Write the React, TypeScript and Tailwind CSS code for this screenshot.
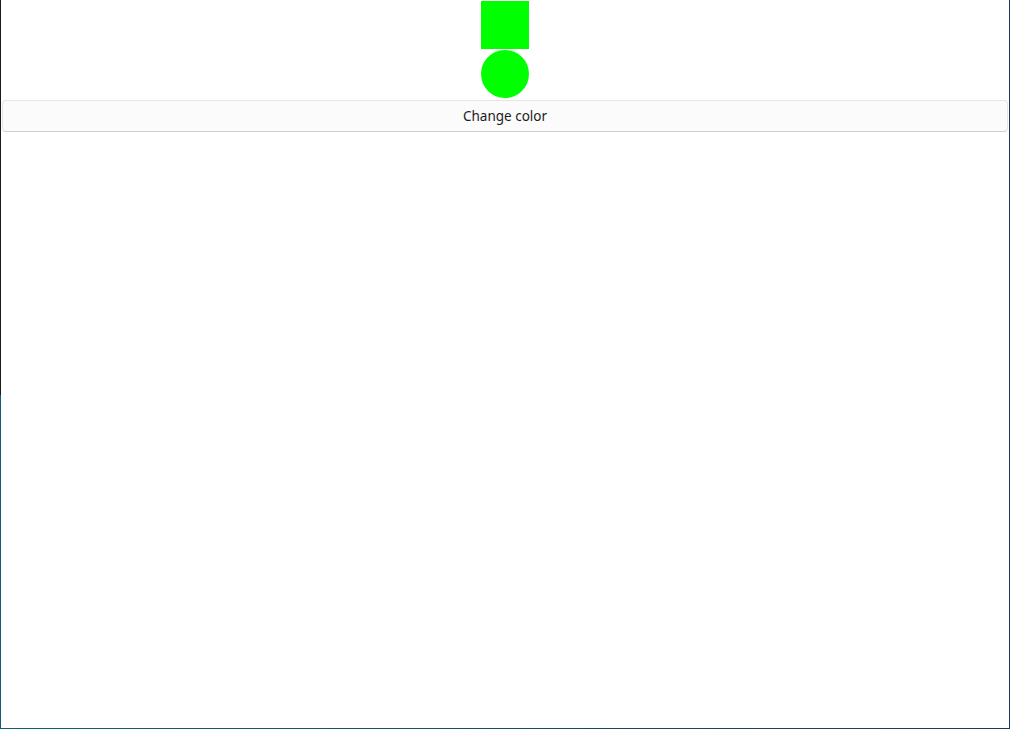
import { useState } from "react";

const colors = ["#00ff00", "#ff0000", "#0000ff"];

export default function App() {
  const [idx, setIdx] = useState(0);
  const color = colors[idx];

  return (
    <div className="flex h-[729px] w-full flex-col">
      <div className="flex flex-1">
        <div className="w-px bg-[linear-gradient(to_bottom,#1b1b1b_0,#1b1b1b_395px,#0e5f78_395px)]" />
        <main className="flex flex-1 flex-col items-center bg-white pt-px">
          <div className="h-12 w-12" style={{ backgroundColor: color }} />
          <div className="mt-px h-12 w-12 rounded-full" style={{ backgroundColor: color }} />
          <button
            type="button"
            onClick={() => setIdx((i) => (i + 1) % colors.length)}
            className="mx-px mt-0.5 h-8 w-[calc(100%-2px)] rounded border border-[#e5e5e5] border-b-[#d0d0d0] bg-[#fbfbfb] font-['Noto_Sans',sans-serif] text-[13.5px] text-[#1b1b1b]"
          >
            Change color
          </button>
        </main>
        <div className="w-px bg-[#1d3a5c]" />
      </div>
      <div className="h-px bg-[linear-gradient(to_right,#0e5f78,#1d3a5c)]" />
    </div>
  );
}
